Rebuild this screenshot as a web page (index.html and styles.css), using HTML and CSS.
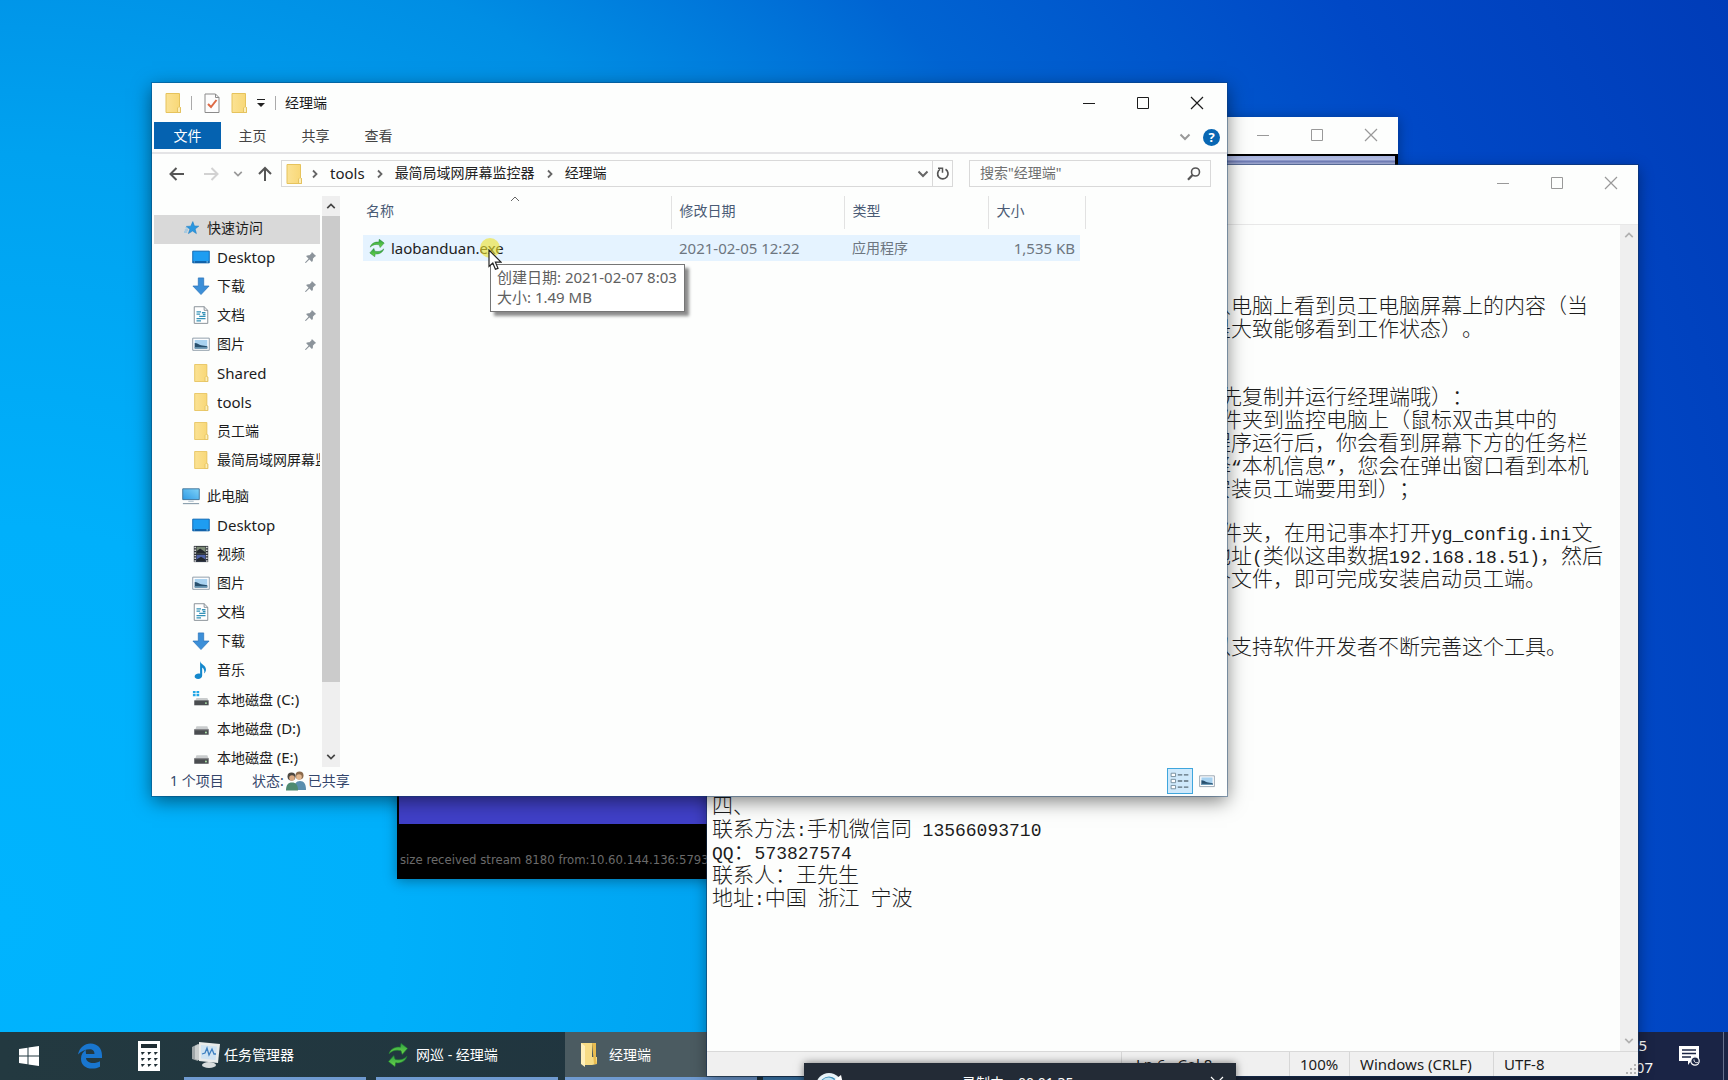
FILE: index.html
```html
<!DOCTYPE html>
<html lang="zh-CN">
<head>
<meta charset="utf-8">
<title>经理端</title>
<link rel="stylesheet" href="styles.css">
</head>
<body>
<svg class="defs" aria-hidden="true">
  <defs>
    <linearGradient id="g-folder" x1="0" x2="1"><stop offset="0" stop-color="#fbe294"/><stop offset="1" stop-color="#f8d775"/></linearGradient>
    <linearGradient id="g-screen" x1="0" y1="1" x2="1" y2="0"><stop offset="0" stop-color="#2f9be6"/><stop offset="1" stop-color="#7fd2f7"/></linearGradient>
    <linearGradient id="g-green" x1="0" y1="0" x2="0" y2="1"><stop offset="0" stop-color="#2ea043"/><stop offset="1" stop-color="#6ed84a"/></linearGradient>
    <symbol id="folder" viewBox="0 0 20 20"><path d="M3 .5h13.500v13l1 1v5H3z" fill="url(#g-folder)" stroke="#e6c35c"/><path d="M14.500 19.500v-4.500l1.500-1.500 1.500 1v5z" fill="#fdeeb8" stroke="#e0bc55" stroke-width=".8"/></symbol>
    <symbol id="star" viewBox="0 0 20 20"><path d="M11 2l2 5.500 5.500.2-4.600 3.500 1.600 5.800-4.800-3.200L5.500 17l1.800-5.500L3 8l5.500-.3z" fill="#2b97e0" stroke="#1a7cc4" stroke-width=".7"/><path d="M1 12.500h4M0 15h4M2 9.800h3" stroke="#5fb2e8"/></symbol>
    <symbol id="desktop" viewBox="0 0 20 20"><path d="M.8 3.500h18.400v13H.8z" fill="#1e9df2" stroke="#0b62ae"/><path d="M1 15.500h18" stroke="#0a4f94" stroke-width="1.500"/><path d="M2 15.500h1M16 15.500h2" stroke="#9fe0ff"/></symbol>
    <symbol id="download" viewBox="0 0 20 20"><path d="M7 1h6v9h6l-9 9.500L1 10h6z" fill="#3c8fd8" stroke="#2a74ba" stroke-width=".8"/></symbol>
    <symbol id="doc" viewBox="0 0 20 20"><path d="M2.500 .8h11l4 4v14.500h-15z" fill="#fff" stroke="#7f888f"/><path d="M13.500 .8v4h4" fill="none" stroke="#7f888f"/><path d="M5 6.500h5M5 9h4M5 14h10M5 16.500h5M11 7.500h4M8 11.500h7M12 9.500h3" stroke="#3492b8" stroke-width="1.400"/></symbol>
    <symbol id="picture" viewBox="0 0 20 20"><path d="M.8 3.500h18.400v13.500H.8z" fill="#fff" stroke="#8795a3"/><path d="M3 5.500h14v9.500H3z" fill="#a8d2f0"/><path d="M3 9c3 0 5 2 7 2.500s5 1 7 1v2.500H3z" fill="#28506e"/><path d="M3 13.500h14V15H3z" fill="#6d9cb8"/></symbol>
    <symbol id="pc" viewBox="0 0 20 20"><path d="M.8 2h18.400v12H.8z" fill="url(#g-screen)" stroke="#3c6f95"/><path d="M7 15.800h6" stroke="#9fb5c4"/><path d="M1 18.500h18" stroke="#6c8798"/></symbol>
    <symbol id="video" viewBox="0 0 20 20"><path d="M2 1h16v18H2z" fill="#30343a"/><path d="M5 2h10v7.500H5z" fill="#7b8a75"/><path d="M5 11h10v7H5z" fill="#4e62a8"/><path d="M5 7l4-3 6 4v1.500H5zM5 16l5-3 5 3v2H5z" fill="#23282e"/><path d="M3.500 2v17M16.500 2v17" stroke="#eee" stroke-width="1.600" stroke-dasharray="1.600 1.400"/></symbol>
    <symbol id="music" viewBox="0 0 20 20"><path d="M9 0c.5 4 6.500 4.500 6.500 9.500 0 1.800-.8 3.200-2 4.500.6-3-.2-5.500-2.200-6.700V16c0 2.200-2 4-4.500 4S2.500 18.500 3 16.700C3.500 14.500 6.500 13.500 9 14.300z" fill="#1488cc"/></symbol>
    <symbol id="disk" viewBox="0 0 20 20"><path d="M5 8h12l1.500 4h-15z" fill="#c9cccd"/><path d="M2.500 11.500h16v6h-16z" fill="#4a4d50"/><path d="M2.500 11.500h16v1h-16z" fill="#88898b"/><circle cx="15.500" cy="15" r="1" fill="#b7f5b2"/></symbol>
    <symbol id="sysdisk" viewBox="0 0 20 20"><path d="M1 1h3v2.500H1zM5 1h3v2.500H5zM1 4.500h3V7H1zM5 4.500h3V7H5z" fill="#22a6e6"/><path d="M5 9h12l1.500 3h-15z" fill="#c9cccd"/><path d="M2.500 11.500h16v5.500h-16z" fill="#4a4d50"/><circle cx="15.500" cy="14.500" r="1" fill="#b7f5b2"/></symbol>
    <symbol id="pin" viewBox="0 0 14 14"><path d="M8.500 1l4.500 4.500-1.500.6-2 2.200c.4 1.600 0 2.600-1 3.600L5.800 9.200 2 13l-1-.6 3.900-4.100L2.200 5.500c1.200-1 2.400-1.200 3.700-.8l2-2z" fill="#8c949b"/></symbol>
    <symbol id="sync" viewBox="0 0 20 20"><path d="M2.500 9C3.500 5 8 2.800 12 3.500L12.500.300 18 4.500l-4.500 5-1-3C9 5.500 5.500 6 2.500 9z" fill="url(#g-green)" stroke="#1d7a30" stroke-width=".5"/><path d="M17.500 11C16.500 15 12 17.200 8 16.500l-.5 3.200L2 15.500l4.500-5 1 3c3.500 1 7 .5 10-2.500z" fill="url(#g-green)" stroke="#1d7a30" stroke-width=".5"/></symbol>
    <symbol id="min" viewBox="0 0 14 14"><path d="M1 7.500h12" stroke="currentColor" fill="none"/></symbol>
    <symbol id="max" viewBox="0 0 14 14"><path d="M1.500 1.500h11v11h-11z" stroke="currentColor" fill="none"/></symbol>
    <symbol id="close" viewBox="0 0 14 14"><path d="M1 1l12 12M13 1L1 13" stroke="currentColor" fill="none" stroke-width="1.200"/></symbol>
    <symbol id="down" viewBox="0 0 12 12"><path d="M1.500 3.500L6 8l4.500-4.500" stroke="currentColor" fill="none" stroke-width="2"/></symbol>
    <symbol id="up" viewBox="0 0 12 12"><path d="M1.500 8.500L6 4l4.500 4.500" stroke="currentColor" fill="none" stroke-width="2"/></symbol>
    <symbol id="right" viewBox="0 0 12 12"><path d="M4 2.500l3.500 3.500L4 9.500" stroke="currentColor" fill="none" stroke-width="1.800"/></symbol>
  </defs>
</svg>

<main class="desktop">

  <section class="window viewer" aria-label="网巡">
    <header class="viewer-title">
      <div class="controls">
        <button aria-label="最小化"><svg><use href="#min"/></svg></button>
        <button aria-label="最大化"><svg><use href="#max"/></svg></button>
        <button aria-label="关闭"><svg><use href="#close"/></svg></button>
      </div>
    </header>
    <div class="viewer-screen"></div>
    <footer class="viewer-log">size received stream 8180 from:10.60.144.136:5793</footer>
  </section>

  <nav class="taskbar" aria-label="任务栏">
    <button class="launch start" aria-label="开始"><svg class="i20" viewBox="0 0 20 20"><path d="M0 3l8.500-1.200v7.700H0zM9.500 1.600L20 0v9.500H9.500zM0 10.500h8.500v7.700L0 17zM9.500 10.500H20V20L9.500 18.400z" fill="#fff"/></svg></button>
    <button class="launch edge" aria-label="Edge"><svg class="i26" viewBox="0 0 26 26"><path d="M1 11.500C2.500 4.500 7.500.5 13.500.5c7 0 11.500 5 11.500 11.800V15H9c.3 3.500 3.500 5 7 5 2.800 0 5-.7 7-1.800v5.500c-2.400 1.300-5 1.800-8 1.800-6.500 0-11-3.500-11-9.800 0-4 2-7.400 5.500-9.200C8 7.800 9.200 9.300 9 11h8.500c0-3-1.500-4.800-5-4.800-4 0-8.500 2-11.500 5.300z" fill="#1976cf"/></svg></button>
    <button class="launch calculator" aria-label="计算器"><svg class="calc" viewBox="0 0 22 30"><path d="M0 0h22v30H0z" fill="#fff"/><path d="M3 3h16v4H3z" fill="#1f2d33"/><path d="M3 11h4l-3 3zM9.500 11h4l-3 3zM16 11h4l-3 3zM3 17h4l-3 3zM9.500 17h4l-3 3zM16 17h4l-3 3zM3 23h4l-3 3zM9.500 23h4l-3 3zM16 23h4l-3 3z" fill="#1f2d33"/></svg></button>
    <button class="task"><svg class="i28" viewBox="0 0 28 28"><path d="M0 6l6-3v17l-6-2z" fill="#9fa6a8"/><path d="M3 5l6-3v18l-6-2z" fill="#c9cdcd"/><path d="M7 1l21 2-2 19-19-2z" fill="#e8ebea"/><path d="M9 4l16 1.500-1.500 13.500L9 17.500z" fill="#cfe3f2"/><path d="M10 13l3-1 2-5 2 7 3-6 2 5 2 0" fill="none" stroke="#3d7fc0" stroke-width="1.300"/><ellipse cx="17" cy="24" rx="7" ry="3" fill="#d9dddd"/></svg><span>任务管理器</span></button>
    <button class="task patrol"><svg class="i24"><use href="#sync"/></svg><span>网巡 - 经理端</span></button>
    <button class="task active"><svg class="i24" viewBox="0 0 24 24"><path d="M4 0h11v14l5 0v7l-5 1H8l-4-2z" fill="#f7dc86"/><path d="M4 0l4 3v21l-4-3z" fill="#fff0bb"/><path d="M15 0h4v17l1 4h-3z" fill="#e9bc50"/></svg><span>经理端</span></button>
    <button class="task rest" aria-label="记事本"></button>
    <div class="tray">
      <time>08:04:05<br>2021/2/07</time>
      <button class="launch" aria-label="通知"><svg class="i22" viewBox="0 0 22 22"><path d="M1 1h20v15h-8l-3 4v-4H1z" fill="#fff"/><path d="M4 5h14M4 8.500h14M4 12h9" stroke="#1c2644" stroke-width="1.300"/><circle cx="17" cy="16" r="4.200" fill="#1c2644" stroke="#fff" stroke-width="1.200"/><path d="M16 14.500c0 3 2 3.500 4 3" stroke="#fff" fill="none"/></svg></button>
    </div>
  </nav>

  <section class="window notepad" aria-label="记事本">
    <header class="notepad-title">
      <div class="controls">
        <button aria-label="最小化"><svg><use href="#min"/></svg></button>
        <button aria-label="最大化"><svg><use href="#max"/></svg></button>
        <button aria-label="关闭"><svg><use href="#close"/></svg></button>
      </div>
    </header>
    <div class="notepad-body">
      <div class="text" role="textbox" aria-multiline="true" contenteditable="true" spellcheck="false">
        <div class="para tail"><p>从电脑上看到员工电脑屏幕上的内容（当</p><p>是大致能够看到工作状态）。</p></div>
        <div class="para tail"><p class="half">先复制并运行经理端哦）：</p><p class="half">件夹到监控电脑上（鼠标双击其中的</p><p>程序运行后，你会看到屏幕下方的任务栏</p><p>择<b>“</b>本机信息<b>”</b>，您会在弹出窗口看到本机</p><p>安装员工端要用到）；</p></div>
        <div class="para tail"><p class="half">件夹，在用记事本打开<b>yg_config.ini</b>文</p><p>地址<b>(</b>类似这串数据<b>192.168.18.51)</b>，然后</p><p>个文件，即可完成安装启动员工端。</p></div>
        <div class="para tail"><p>以支持软件开发者不断完善这个工具。</p></div>
        <div class="para"><p>四、</p><p>联系方法<b>:</b>手机微信同<b> 13566093710</b></p><p><b>QQ</b>：<b>573827574</b></p><p>联系人：王先生</p><p>地址<b>:</b>中国<b> </b>浙江<b> </b>宁波</p></div>
      </div>
      <div class="scroll faint"><button aria-label="向上滚动"><svg><use href="#up"/></svg></button><button aria-label="向下滚动"><svg><use href="#down"/></svg></button></div>
    </div>
    <footer class="notepad-status"><span>Ln 6,&nbsp; Col 8</span><span>100%</span><span>Windows (CRLF)</span><span>UTF-8</span><svg class="grip" viewBox="0 0 12 12"><path d="M9 1h2v2H9zM5 5h2v2H5zM9 5h2v2H9zM1 9h2v2H1zM5 9h2v2H5zM9 9h2v2H9z" fill="#b4b4b4"/></svg></footer>
  </section>

  <section class="window explorer" aria-label="经理端">
    <header class="titlebar">
      <svg class="i20"><use href="#folder"/></svg>
      <i class="bar"></i>
      <button aria-label="属性"><svg class="i20" viewBox="0 0 20 20"><path d="M3 1h10.500l3.500 3.500v15H3z" fill="#fdfdfd" stroke="#8b8b8b"/><path d="M13.500 1v3.500H17" fill="none" stroke="#8b8b8b"/><path d="M6 11l3 3 5.500-7" fill="none" stroke="#dd6a45" stroke-width="2"/></svg></button>
      <button aria-label="新建文件夹"><svg class="i20"><use href="#folder"/></svg></button>
      <button aria-label="自定义快速访问工具栏"><svg class="i10" viewBox="0 0 10 10"><path d="M1 1.500h8" stroke="#222"/><path d="M1 5h8L5 9z" fill="#222"/></svg></button>
      <i class="bar"></i>
      <h1>经理端</h1>
      <div class="controls">
        <button aria-label="最小化"><svg><use href="#min"/></svg></button>
        <button aria-label="最大化"><svg><use href="#max"/></svg></button>
        <button aria-label="关闭"><svg><use href="#close"/></svg></button>
      </div>
    </header>
    <div class="ribbon">
      <button class="file">文件</button><button>主页</button><button>共享</button><button>查看</button>
      <div class="help">
        <button aria-label="展开功能区"><svg class="i12 grey"><use href="#down"/></svg></button>
        <button class="q" aria-label="帮助">?</button>
      </div>
    </div>
    <div class="addressbar">
      <div class="arrows">
        <button aria-label="后退"><svg class="i16" viewBox="0 0 16 16"><path d="M15 8H2M7.500 2L1.500 8l6 6" fill="none" stroke="#555" stroke-width="2"/></svg></button>
        <button aria-label="前进"><svg class="i16" viewBox="0 0 16 16"><path d="M1 8h13M8.500 2l6 6-6 6" fill="none" stroke="#d2d2d2" stroke-width="2"/></svg></button>
        <button aria-label="最近位置"><svg class="i10 grey"><use href="#down"/></svg></button>
        <button aria-label="上移"><svg class="i16" viewBox="0 0 16 16"><path d="M8 15V2M2 8l6-6 6 6" fill="none" stroke="#555" stroke-width="2"/></svg></button>
      </div>
      <div class="path">
        <svg class="i20"><use href="#folder"/></svg>
        <svg class="i12"><use href="#right"/></svg><a class="latin" href="#tools">tools</a>
        <svg class="i12"><use href="#right"/></svg><a href="#monitor">最简局域网屏幕监控器</a>
        <svg class="i12"><use href="#right"/></svg><a href="#manager">经理端</a>
        <button class="drop" aria-label="历史"><svg class="i12"><use href="#down"/></svg></button>
        <button class="reload" aria-label="刷新"><svg class="i14" viewBox="0 0 14 14"><path d="M9.500 2.300A5.200 5.200 0 1 1 4 2.400" fill="none" stroke="#555" stroke-width="1.700"/><path d="M2 1.200h4.500v4.500" fill="none" stroke="#555" stroke-width="1.500"/></svg></button>
      </div>
      <label class="search"><input type="text" placeholder="搜索&quot;经理端&quot;" aria-label="搜索"><svg class="i14" viewBox="0 0 14 14"><circle cx="8.500" cy="5" r="4" fill="none" stroke="#555" stroke-width="1.600"/><path d="M5.500 8L1 12.800" stroke="#555" stroke-width="2.200"/></svg></label>
    </div>
    <div class="content">
      <nav class="tree" aria-label="导航窗格">
        <ul>
          <li class="root current"><a href="#"><svg class="i16"><use href="#star"/></svg>快速访问</a></li>
          <li><a class="latin" href="#"><svg class="i18"><use href="#desktop"/></svg>Desktop<svg class="pin"><use href="#pin"/></svg></a></li>
          <li><a href="#"><svg class="i18"><use href="#download"/></svg>下载<svg class="pin"><use href="#pin"/></svg></a></li>
          <li><a href="#"><svg class="i18"><use href="#doc"/></svg>文档<svg class="pin"><use href="#pin"/></svg></a></li>
          <li><a href="#"><svg class="i18"><use href="#picture"/></svg>图片<svg class="pin"><use href="#pin"/></svg></a></li>
          <li><a class="latin" href="#"><svg class="i18"><use href="#folder"/></svg>Shared</a></li>
          <li><a class="latin" href="#"><svg class="i18"><use href="#folder"/></svg>tools</a></li>
          <li><a href="#"><svg class="i18"><use href="#folder"/></svg>员工端</a></li>
          <li><a href="#"><svg class="i18"><use href="#folder"/></svg>最简局域网屏幕监控器</a></li>
        </ul>
        <ul>
          <li class="root"><a href="#"><svg class="i18"><use href="#pc"/></svg>此电脑</a></li>
          <li><a class="latin" href="#"><svg class="i18"><use href="#desktop"/></svg>Desktop</a></li>
          <li><a href="#"><svg class="i18"><use href="#video"/></svg>视频</a></li>
          <li><a href="#"><svg class="i18"><use href="#picture"/></svg>图片</a></li>
          <li><a href="#"><svg class="i18"><use href="#doc"/></svg>文档</a></li>
          <li><a href="#"><svg class="i18"><use href="#download"/></svg>下载</a></li>
          <li><a href="#"><svg class="i18"><use href="#music"/></svg>音乐</a></li>
          <li><a href="#"><svg class="i18"><use href="#sysdisk"/></svg><span>本地磁盘 <span class="latin">(C:)</span></span></a></li>
          <li><a href="#"><svg class="i18"><use href="#disk"/></svg><span>本地磁盘 <span class="latin">(D:)</span></span></a></li>
          <li><a href="#"><svg class="i18"><use href="#disk"/></svg><span>本地磁盘 <span class="latin">(E:)</span></span></a></li>
        </ul>
      </nav>
      <div class="scroll"><button aria-label="向上滚动"><svg><use href="#up"/></svg></button><i class="thumb"></i><button aria-label="向下滚动"><svg><use href="#down"/></svg></button></div>
      <div class="files">
        <table>
          <thead><tr><th class="c-name">名称<svg class="sort" viewBox="0 0 10 6"><path d="M1 5l4-4 4 4" fill="none" stroke="#666"/></svg></th><th class="c-date">修改日期</th><th class="c-type">类型</th><th class="c-size">大小</th></tr></thead>
          <tbody><tr><td class="latin"><div class="name"><svg class="i18"><use href="#sync"/></svg>laobanduan.exe</div></td><td class="latin">2021-02-05 12:22</td><td>应用程序</td><td class="size latin">1,535 KB</td></tr></tbody>
        </table>
      </div>
    </div>
    <footer class="statusbar">
      <span class="count">1 个项目</span><span>状态:</span>
      <svg class="i20" viewBox="0 0 20 20"><circle cx="13.500" cy="4.500" r="4" fill="#8b6a4c"/><circle cx="13" cy="6" r="2.800" fill="#e3b890"/><path d="M8 19c0-6 2-9 6-9s6 3 6 9z" fill="#5a8eae"/><circle cx="5.500" cy="5.500" r="4" fill="#4c4740"/><circle cx="6" cy="7" r="2.800" fill="#d9a983"/><path d="M0 19.500c0-5.500 2-8 6-8s6 2.500 6 8z" fill="#4f8a70"/></svg>
      <span>已共享</span>
      <div class="views">
        <button class="on" aria-label="详细信息"><svg class="i20" viewBox="0 0 18 18"><path d="M1 2h4v3H1zM1 7.500h4v3H1zM1 13h4v3H1z" fill="#fff" stroke="#6f8797" stroke-width=".8"/><path d="M7 3.500h4M12.500 3.500h4M7 9h4M12.500 9h4M7 14.500h4M12.500 14.500h4" stroke="#5d6f7b" stroke-width="1.200"/></svg></button>
        <button aria-label="大图标"><svg class="i16"><use href="#picture"/></svg></button>
      </div>
    </footer>
  </section>

  <i class="halo"></i>
  <div class="tooltip" role="tooltip">创建日期: 2021-02-07 8:03<br>大小: 1.49 MB</div>
  <svg class="cursor" viewBox="0 0 14 22"><path d="M1 1v16.500l3.800-3.500 2.600 6.300 2.600-1-2.600-6.100H13z" fill="#fff" stroke="#222" stroke-width="1.200"/></svg>

  <section class="recorder" aria-label="录制">
    <svg class="i28" viewBox="0 0 28 28"><circle cx="13" cy="14" r="13" fill="#e9f3f8"/><circle cx="13" cy="14" r="9.500" fill="#3f8fb8"/><path d="M6 9c4-5 10-4 13 0l-5 3z" fill="#bfe2f2"/><path d="M17 9l8-6 2 9z" fill="#fff"/></svg>
    <span class="state">录制中</span><span>00:01:35</span>
    <button aria-label="关闭"><svg><use href="#close"/></svg></button>
  </section>
</main>
</body>
</html>
```
FILE: styles.css
```css
* { box-sizing: border-box; }

body {
  margin: 0;
  font: 14px/20px "Noto Sans", "Noto Sans CJK SC", sans-serif;
  color: #1c1c1c;
}

button {
  display: flex;
  align-items: center;
  justify-content: center;
  padding: 0;
  border: 0;
  background: none;
  color: inherit;
  font: inherit;
}

a { color: inherit; text-decoration: none; }
p, h1, ul { margin: 0; padding: 0; }
svg { display: block; flex: none; }
.defs { position: absolute; width: 0; height: 0; }
.latin { font-size: 15px; }

.i10 { width: 10px; height: 10px; }
.i12 { width: 12px; height: 12px; }
.i14 { width: 14px; height: 14px; }
.i16 { width: 16px; height: 16px; }
.i18 { width: 18px; height: 18px; }
.i20 { width: 20px; height: 20px; }
.i22 { width: 22px; height: 22px; }
.i24 { width: 24px; height: 24px; }
.i26 { width: 26px; height: 26px; }
.i28 { width: 28px; height: 28px; }
.calc { width: 22px; height: 30px; }
.grey { color: #999; }

.desktop {
  position: relative;
  height: 100vh;
  overflow: hidden;
  background: radial-gradient(circle at 0 85%, #00b4fe 0, #00b0fb 20%, #00a2f0 39%, #008ee4 52%, #0064d2 65%, #0048c6 83%, #003cb8 100%);
}

.window {
  position: absolute;
  display: flex;
  flex-direction: column;
  background: #fdfefd;
}

.controls { display: flex; justify-content: flex-end; margin-left: auto; }
.controls button { width: 54px; height: 36px; }
.controls svg { width: 14px; height: 14px; }

/* Remote screen viewer */
.viewer {
  left: 397px;
  top: 117px;
  width: 1001px;
  height: 762px;
  background: #000;
  box-shadow: 0 2px 12px rgba(0, 0, 0, .35);
}
.viewer-title { background: #fdfefd; color: #999; height: 37px; }
.viewer-screen {
  flex: 1;
  margin: 2px 3px 0 2px;
  background: linear-gradient(#a8b4e0 0, #bcc6ec 4px, #6a78b8 5px, #b4bfe8 8px, #4040c8 14px);
}
.viewer-log {
  height: 55px;
  padding: 26px 0 0 3px;
  color: #6b6b6b;
  font-family: "DejaVu Sans Condensed", "DejaVu Sans", sans-serif;
  font-size: 13px;
}

/* Taskbar */
.taskbar {
  position: absolute;
  left: 0;
  right: 0;
  bottom: 0;
  display: flex;
  height: 48px;
  background: linear-gradient(90deg, #233940, #20353f 40%, #1a2445 90%);
  color: #fff;
}
.start { width: 58px; }
.edge { width: 64px; }
.calculator { width: 54px; margin-right: 8px; }
.task {
  width: 182px;
  margin-right: 10px;
  padding-left: 8px;
  justify-content: flex-start;
  gap: 4px;
  border-bottom: 3px solid #6f9ad0;
}
.task.patrol { margin-right: 7px; padding-left: 10px; gap: 6px; }
.task.active { width: 192px; margin-right: 6px; background: #4b5b61; padding-left: 12px; gap: 8px; }
.task.rest { border-color: #3d7ab0; }
.tray { display: flex; margin-left: auto; border-right: 1px solid #66708c; margin-right: 4px; }
.tray time { align-self: center; text-align: center; padding-right: 2px; font-size: 15px; line-height: 22px; }
.tray .launch { width: 68px; }

/* Notepad */
.notepad {
  left: 707px;
  top: 165px;
  width: 931px;
  height: 911px;
  box-shadow: 0 0 0 1px rgba(20, 50, 90, .5), 0 4px 14px rgba(0, 0, 0, .4);
}
.notepad-title { height: 60px; border-bottom: 1px solid #e8e8e8; color: #999; }
.notepad-body { flex: 1; display: flex; min-height: 0; }
.text {
  flex: 1;
  padding: 68px 0 0 5px;
  font: 300 21px/23px "Noto Sans CJK SC", sans-serif;
  text-spacing-trim: space-all;
  white-space: pre;
  outline: 0;
  display: flex;
  flex-direction: column;
}
.text p { height: 23px; }
.text b { font: 18px/23px "Liberation Mono", "Noto Sans CJK SC", monospace; }
.para { margin-bottom: 45px; }
.para:nth-child(2) { margin-bottom: 21px; }
.para:nth-child(4) { margin-bottom: 136px; }
.tail { padding-left: 498px; }
.half { padding-left: 11px; }
.notepad-status {
  display: flex;
  height: 25px;
  background: #f0f0f0;
  border-top: 1px solid #d9d9d9;
  padding-left: 414px;
  font-size: 15px;
}
.notepad-status span { border-left: 1px solid #d7d7d7; padding-left: 10px; line-height: 24px; }
.notepad-status span:nth-child(1) { width: 168px; padding-left: 14px; }
.notepad-status span:nth-child(2) { width: 60px; }
.notepad-status span:nth-child(3) { width: 144px; }
.grip { width: 12px; height: 12px; margin: auto 1px 1px auto; }

/* Scroll bars */
.scroll { display: flex; flex-direction: column; width: 18px; background: #efefef; color: #444; }
.scroll button { height: 20px; flex: none; }
.scroll svg { width: 10px; height: 10px; }
.scroll .thumb { height: 466px; background: #cbcbcb; }
.scroll button:last-child { margin-top: auto; }
.scroll.faint { color: #b0b0b0; }

/* File explorer */
.explorer {
  left: 152px;
  top: 83px;
  width: 1075px;
  height: 713px;
  box-shadow: 0 0 0 1px rgba(10, 60, 110, .4), 0 5px 18px rgba(0, 0, 0, .5);
}
.titlebar { display: flex; align-items: center; height: 39px; padding: 0 3px 0 11px; }
.titlebar .controls button { height: 38px; }
.bar { width: 1px; height: 14px; background: #aaa; }
.titlebar > .bar:nth-child(2) { margin: 0 10px 0 8px; }
.titlebar > button { margin-right: 7px; }
.titlebar > button + button + button { margin-right: 9px; }
.titlebar h1 { margin-left: 9px; font: inherit; }

.ribbon { display: flex; height: 32px; padding-left: 2px; border-bottom: 2px solid #e4e4e6; color: #444; }
.ribbon > button { width: 63px; height: 28px; }
.ribbon > .file { width: 67px; height: 27px; background: #0562b0; color: #fff; }
.help { display: flex; align-items: center; gap: 12px; margin-left: auto; padding-right: 7px; }
.help .q { width: 17px; height: 17px; border-radius: 50%; background: #0967b3; color: #fff; font-weight: 700; font-size: 13px; }

.addressbar { display: flex; align-items: center; height: 39px; padding: 0 16px 0 17px; }
.arrows { display: flex; align-items: center; gap: 18px; width: 112px; }
.arrows button:nth-child(3) { margin: 0 -4px; }
.path {
  flex: 1;
  display: flex;
  align-items: center;
  height: 27px;
  border: 1px solid #d9d9d9;
  padding-left: 2px;
  color: #666;
}
.path > .i20 { margin-right: -4px; }
.path > .i12 { margin: 0 9px; }
.path a { color: #222; padding-bottom: 2px; }
.drop { width: 18px; margin-left: auto; }
.reload { width: 20px; height: 25px; border-left: 1px solid #d9d9d9; }
.search {
  display: flex;
  align-items: center;
  width: 242px;
  height: 27px;
  margin-left: 16px;
  padding: 0 9px 0 10px;
  border: 1px solid #d9d9d9;
}
.search input { flex: 1; min-width: 0; padding: 0 0 1px; border: 0; background: none; font: inherit; outline: 0; }
.search input::placeholder { color: #707070; opacity: 1; }

.content { flex: 1; display: flex; min-height: 0; padding-top: 3px; }
.tree { width: 170px; padding: 19px 2px 0; overflow: hidden; }
.tree ul { list-style: none; margin-bottom: 7px; }
.tree a { display: flex; align-items: center; height: 29px; padding: 0 0 3px 38px; gap: 7px; white-space: nowrap; overflow: hidden; }
.tree .root a { padding-left: 28px; }
.tree .current a { background: #d9d9d9; padding-left: 30px; }
.tree .pin { width: 13px; height: 13px; margin: 0 3px 0 auto; }

.files { flex: 1; padding-left: 23px; }
table { border-collapse: collapse; table-layout: fixed; width: 722px; }
th { height: 33px; padding: 0 0 4px 8px; border-right: 1px solid #e2e2e2; text-align: left; font-weight: 400; color: #4a5b75; }
th.c-name { width: 308px; padding-left: 3px; position: relative; }
.c-date { width: 173px; }
.c-type { width: 144px; }
.c-size { width: 97px; }
.sort { position: absolute; left: 147px; top: 0; width: 10px; height: 6px; }
tbody::before { content: ""; display: block; height: 6px; }
td { height: 26px; padding: 0 0 0 8px; background: #e5f3ff; color: #6d7680; white-space: nowrap; }
td:first-child { padding-left: 5px; color: #222; }
td.size { padding: 0 5px 0 0; text-align: right; border-right: 10px solid #fdfefd; }
.name { display: flex; align-items: center; gap: 5px; }

.statusbar { display: flex; align-items: center; height: 29px; padding: 0 7px 2px 18px; color: #33456a; }
.statusbar .count { width: 82px; }
.statusbar .i20 { margin: 0 2px; }
.views { display: flex; margin-left: auto; gap: 1px; }
.views button { width: 26px; height: 26px; }
.views .on { background: #cfe9fb; border: 1px solid #3fa6dd; }

/* Pointer and hover tip */
.halo { position: absolute; left: 480px; top: 238px; width: 20px; height: 20px; border-radius: 50%; background: rgba(238, 226, 40, .6); }
.tooltip {
  position: absolute;
  left: 490px;
  top: 264px;
  padding: 2px 7px 4px 6px;
  border: 1px solid #767676;
  background: #fff;
  color: #606060;
  font-size: 15px;
  box-shadow: 4px 4px 3px rgba(0, 0, 0, .45);
}
.cursor { position: absolute; left: 488px; top: 249px; width: 14px; height: 22px; }

/* Screen recorder strip */
.recorder {
  position: absolute;
  left: 804px;
  bottom: -22px;
  display: flex;
  align-items: center;
  width: 432px;
  height: 39px;
  padding: 0 12px;
  background: #232b36;
  color: #fff;
  box-shadow: 0 0 8px rgba(0, 0, 0, .5);
}
.recorder .i28 { margin-top: 6px; }
.recorder .state { margin: 0 14px 0 118px; }
.recorder button { margin-left: auto; }
.recorder button svg { width: 14px; height: 14px; }
```
